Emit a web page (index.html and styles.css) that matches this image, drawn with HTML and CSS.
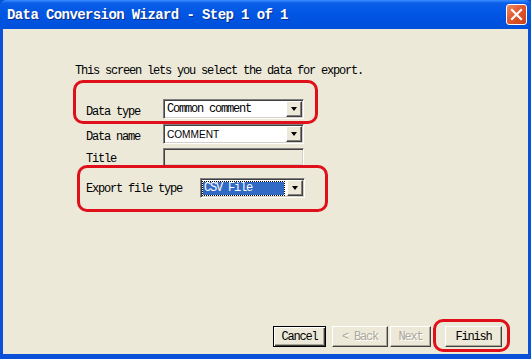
FILE: index.html
```html
<!DOCTYPE html>
<html lang="en">
<head>
    <meta charset="UTF-8">
    <title>Data Conversion Wizard</title>
    <link rel="stylesheet" href="styles.css">
</head>
<body>
    <div class="window">
        <div class="titlebar">
            <span class="title">Data Conversion Wizard - Step 1 of 1</span>
            <span class="close">
                <svg width="13" height="13" viewBox="0 0 13 13">
                    <path d="M2 2 L11 11 M11 2 L2 11" stroke="#fff" stroke-width="2.2" stroke-linecap="square"/>
                </svg>
            </span>
        </div>

        <div class="body">
            <div class="content">
                <p class="intro">This screen lets you select the data for export.</p>

                <div class="row row-type">
                    <label class="label">Data type</label>
                    <div class="combo">
                        <span class="combo-text">Common comment</span>
                        <span class="arrow"></span>
                    </div>
                </div>

                <div class="row row-name">
                    <label class="label">Data name</label>
                    <div class="combo">
                        <span class="combo-text caps">COMMENT</span>
                        <span class="arrow"></span>
                    </div>
                </div>

                <div class="row row-title">
                    <label class="label">Title</label>
                    <div class="field disabled"></div>
                </div>

                <div class="row row-export">
                    <label class="label label-wide">Export file type</label>
                    <div class="combo combo-small">
                        <span class="combo-text selected">CSV File</span>
                        <span class="arrow"></span>
                    </div>
                </div>
            </div>

            <div class="buttons">
                <button class="btn btn-default">Cancel</button>
                <button class="btn btn-back" disabled>&lt; Back</button>
                <button class="btn btn-next" disabled>Next</button>
                <button class="btn btn-finish">Finish</button>
            </div>
        </div>

        <!-- red annotation marks -->
        <div class="mark mark-type"></div>
        <div class="mark mark-export"></div>
        <div class="mark mark-finish"></div>
    </div>
</body>
</html>
```

FILE: styles.css
```css
body {
    margin: 0;
    background: #fff;
    font-family: "Liberation Mono", "DejaVu Sans Mono", monospace;
}

.window {
    position: relative;
    width: 531px;
    height: 359px;
    box-sizing: border-box;
    display: flex;
    flex-direction: column;
    background: #0a50d8;
    padding: 0 3px 5px 3px;
}

.titlebar {
    height: 29px;
    margin: 0 -3px;
    display: flex;
    align-items: center;
    justify-content: space-between;
    padding: 0 4px 0 7px;
    background: linear-gradient(#3a8cff 0, #0a5ee8 3px, #0055e3 50%, #0050da 100%);
    border-radius: 6px 6px 0 0;
}

.title {
    color: #fff;
    font-size: 14px;
    font-weight: bold;
    letter-spacing: -0.6px;
    text-shadow: 1px 1px 0 #0a2f8a;
    margin-top: 1px;
}

.close {
    width: 19px;
    height: 19px;
    border: 1px solid #fff;
    border-radius: 3px;
    background: linear-gradient(135deg, #f08a62 0, #e2582e 45%, #c9401c 100%);
    display: flex;
    align-items: center;
    justify-content: center;
}

.body {
    flex: 1;
    display: flex;
    flex-direction: column;
    background: #ece9d8;
}

.content {
    flex: 1;
    padding: 36px 0 0 72px;
    font-size: 12px;
    letter-spacing: -1.2px;
    color: #000;
}

.intro {
    margin: 0;
    line-height: 12px;
}

.row {
    display: flex;
    align-items: flex-end;
    padding-left: 11px;
}

.row-type { margin-top: 22px; }
.row-name { margin-top: 5px; }
.row-title { margin-top: 4px; }
.row-export { margin-top: 12px; }

.label {
    width: 77px;
    line-height: 12px;
    padding-bottom: 1px;
}

.label-wide {
    width: 114px;
    padding-bottom: 3px;
}

.combo {
    position: relative;
    width: 141px;
    height: 20px;
    box-sizing: border-box;
    background: #fff;
    border-top: 1px solid #808080;
    border-left: 1px solid #808080;
    border-right: 1px solid #fff;
    border-bottom: 1px solid #fff;
    box-shadow: inset 1px 1px 0 #404040, inset -1px -1px 0 #d4d0c8;
    display: flex;
    align-items: center;
    padding: 0 20px 0 2px;
}

.combo-small {
    width: 105px;
}

.combo-text {
    line-height: 13px;
    padding: 0 1px;
}

.caps {
    font-family: "Liberation Sans Narrow", "Liberation Sans", sans-serif;
    letter-spacing: 0;
    font-size: 11px;
    transform: scaleX(0.92);
    transform-origin: left;
}

.selected {
    flex: 1;
    background: #316ac5;
    color: #fff;
    outline: 1px dotted #000;
}

.arrow {
    position: absolute;
    right: 1px;
    top: 1px;
    width: 16px;
    height: 16px;
    box-sizing: border-box;
    background: #ece9d8;
    border-top: 1px solid #fff;
    border-left: 1px solid #fff;
    border-right: 1px solid #404040;
    border-bottom: 1px solid #404040;
    box-shadow: inset -1px -1px 0 #808080;
}

.arrow::after {
    content: "";
    position: absolute;
    left: 4px;
    top: 5px;
    border-left: 3.5px solid transparent;
    border-right: 3.5px solid transparent;
    border-top: 4px solid #000;
}

.field {
    width: 141px;
    height: 18px;
    box-sizing: border-box;
    border-top: 1px solid #808080;
    border-left: 1px solid #808080;
    border-right: 1px solid #fff;
    border-bottom: 1px solid #fff;
    box-shadow: inset 1px 1px 0 #404040, inset -1px -1px 0 #d4d0c8;
}

.disabled {
    background: #ece9d8;
}

.buttons {
    display: flex;
    justify-content: flex-end;
    padding: 0 26px 7px 0;
}

.btn {
    height: 21px;
    font-family: "Liberation Mono", "DejaVu Sans Mono", monospace;
    font-size: 12px;
    letter-spacing: -1.2px;
    color: #000;
    background: #ece9d8;
    border-top: 1px solid #fff;
    border-left: 1px solid #fff;
    border-right: 1px solid #404040;
    border-bottom: 1px solid #404040;
    box-shadow: inset -1px -1px 0 #aca899;
    padding: 0;
}

.btn-default {
    width: 53px;
    border: 1px solid #000;
    box-shadow: inset 1px 1px 0 #fff, inset -1px -1px 0 #404040, inset -2px -2px 0 #aca899;
    margin-right: 6px;
}

.btn-back {
    width: 56px;
    margin-right: 2px;
}

.btn-next {
    width: 41px;
    margin-right: 14px;
}

.btn:disabled {
    color: #aca899;
    text-shadow: 1px 1px 0 #fff;
}

.btn-finish {
    width: 57px;
}

.mark {
    position: absolute;
    border: 3px solid #e0101a;
    border-radius: 10px;
}

.mark-type {
    left: 73px;
    top: 80px;
    width: 239px;
    height: 38px;
}

.mark-export {
    left: 77px;
    top: 165px;
    width: 245px;
    height: 41px;
}

.mark-finish {
    left: 433px;
    top: 319px;
    width: 71px;
    height: 27px;
}
```
